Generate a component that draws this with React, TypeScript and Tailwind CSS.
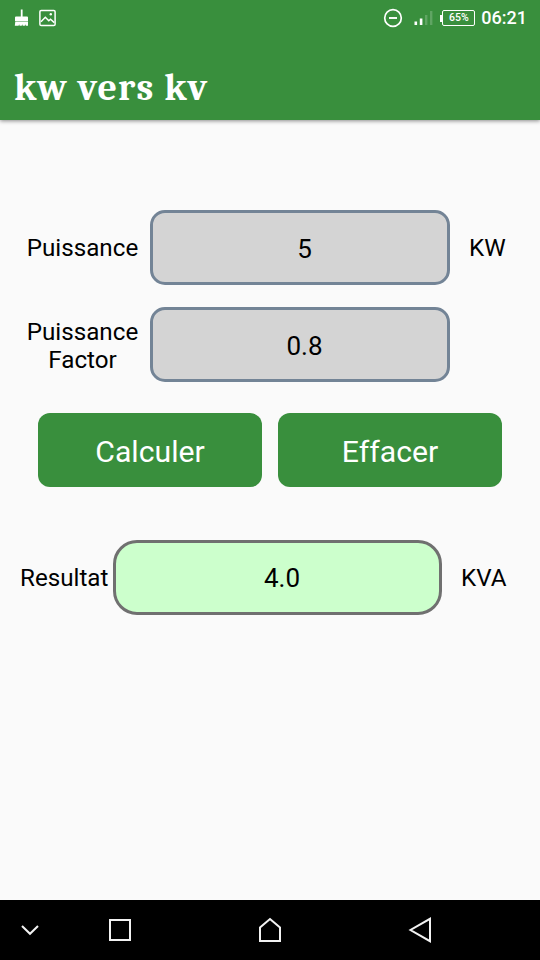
import React, { useState } from 'react';

function StatusBar() {
  return (
    <div className="h-9 flex items-center justify-between pl-[14px] pr-[13px] text-white">
      <div className="flex items-center gap-[10px]">
        {/* Cleaner brush */}
        <svg className="w-[15px] h-[18px]" viewBox="0 0 15 18" fill="currentColor">
          <path d="M6.800 0.500h1.800v7H13a1 1 0 0 1 1 1V12H1V8.500a1 1 0 0 1 1-1h4.800z" />
          <path d="M1.300 12.600h12.700v4.200h-2.200l-.5-1.500-.5 1.500H8.700l-.5-1.500-.5 1.500H5.600l-.5-1.500-.5 1.500H.8z" />
        </svg>
        {/* Picture */}
        <svg className="w-[17px] h-[18px]" viewBox="0 0 17 18" fill="none" stroke="currentColor" strokeWidth="1.500">
          <rect x="0.900" y="1.400" width="15.200" height="15.200" rx="1.300" />
          <path d="M2 12.700l4.300-4.400 3.500 3.500 1.700-1.500 3.800 3.300" />
          <circle cx="11.800" cy="5.200" r="1.200" fill="currentColor" stroke="none" />
        </svg>
      </div>
      <div className="flex items-center">
        <svg className="w-[20px] h-[20px] mr-[11px]" viewBox="0 0 20 20" fill="none" stroke="currentColor" strokeWidth="1.700">
          <circle cx="10" cy="10" r="8.300" />
          <path d="M6 10h8" strokeWidth="1.900" />
        </svg>
        <svg className="w-[19px] h-[16px] mr-[7px]" viewBox="0 0 19 16" fill="currentColor">
          <rect x="0.500" y="11.500" width="2.600" height="3.500" />
          <rect x="5.800" y="8.500" width="2.600" height="6.500" />
          <rect x="11" y="5" width="2.400" height="10" opacity="0.2" />
          <rect x="16" y="1" width="2.400" height="14" opacity="0.2" />
        </svg>
        <div className="flex items-center mr-[6px]">
          <span className="w-[2px] h-[7px] bg-white" />
          <span className="w-[33px] h-[16px] border-[1.5px] border-white rounded-[2px] flex items-center justify-center text-[10.5px] leading-none font-medium">
            65%
          </span>
        </div>
        <span className="text-[18px] leading-none font-medium">06:21</span>
      </div>
    </div>
  );
}

function NavBar() {
  return (
    <nav className="h-[60px] bg-black flex items-center text-[#f2f2f2]">
      <svg className="w-[60px] h-[60px]" viewBox="0 0 60 60" fill="none" stroke="currentColor" strokeWidth="2">
        <path d="M22 26l8 7.800 8-7.800" />
      </svg>
      <svg className="w-[120px] h-[60px]" viewBox="0 0 120 60" fill="none" stroke="currentColor" strokeWidth="2">
        <rect x="50" y="20" width="20" height="20" />
      </svg>
      <svg className="w-[180px] h-[60px]" viewBox="0 0 180 60" fill="none" stroke="currentColor" strokeWidth="2">
        <path d="M80 41V27.500L90 19l10 8.500V41z" />
      </svg>
      <svg className="w-[120px] h-[60px]" viewBox="0 0 120 60" fill="none" stroke="currentColor" strokeWidth="2">
        <path d="M70 18.800v22.400L50.500 30z" />
      </svg>
    </nav>
  );
}

export default function App() {
  const [power, setPower] = useState('5');
  const [factor, setFactor] = useState('0.8');
  const [result, setResult] = useState('4.0');

  const calculate = () => setResult((Number(power) * Number(factor)).toFixed(1));

  const clear = () => {
    setPower('');
    setFactor('');
    setResult('');
  };

  const inputClass =
    'w-[300px] h-[75px] shrink-0 rounded-[15px] border-[3px] border-[#738496] bg-[#d4d4d4] pl-[9px] pt-[2px] text-center text-[26px] outline-none';
  const buttonClass = 'w-[224px] h-[74px] rounded-xl bg-[#398f3d] pt-[3px] text-[30.2px] text-white';

  return (
    <div className="w-[540px] h-[960px] flex flex-col overflow-hidden bg-[#fafafa] font-['Roboto',sans-serif] text-black">
      {/* App bar */}
      <header className="h-[120px] shrink-0 bg-[#398f3d] shadow-[0_1px_4px_rgba(0,0,0,0.45)]">
        <StatusBar />
        <h1 className="mt-[29px] pl-[14px] text-[38px] leading-[46px] tracking-[1.2px] font-bold text-white font-['Cambria','Caladea','Liberation_Serif',serif]">
          kw vers kv
        </h1>
      </header>

      <main className="flex-1 pt-[90px]">
        <div className="flex items-center">
          <label className="w-[150px] pl-[15px] pt-[1px] text-center text-[24.2px] leading-[28px]">Puissance</label>
          <input className={inputClass} value={power} onChange={(e) => setPower(e.target.value)} />
          <span className="ml-[19px] pt-[1px] text-[24.2px] leading-[28px]">KW</span>
        </div>

        <div className="flex items-center mt-[22.4px]">
          <label className="w-[150px] pl-[15px] pt-[2px] text-center text-[24.2px] leading-[28px]">
            Puissance
            <br />
            Factor
          </label>
          <input className={inputClass} value={factor} onChange={(e) => setFactor(e.target.value)} />
        </div>

        <div className="flex justify-center gap-4 mt-[30.6px]">
          <button className={buttonClass} onClick={calculate}>Calculer</button>
          <button className={buttonClass} onClick={clear}>Effacer</button>
        </div>

        {/* Result */}
        <div className="flex items-center mt-[53px]">
          <span className="w-[113px] pl-[20px] pt-[1px] text-[24.2px] leading-[28px]">Resultat</span>
          <output className="w-[329px] h-[75px] shrink-0 flex items-center justify-center rounded-[24px] border-[3px] border-[#707070] bg-[#ccffcc] pl-[9px] pt-[2px] text-[26px]">
            {result}
          </output>
          <span className="ml-[19px] pt-[1px] text-[24.2px] leading-[28px]">KVA</span>
        </div>
      </main>

      <NavBar />
    </div>
  );
}
